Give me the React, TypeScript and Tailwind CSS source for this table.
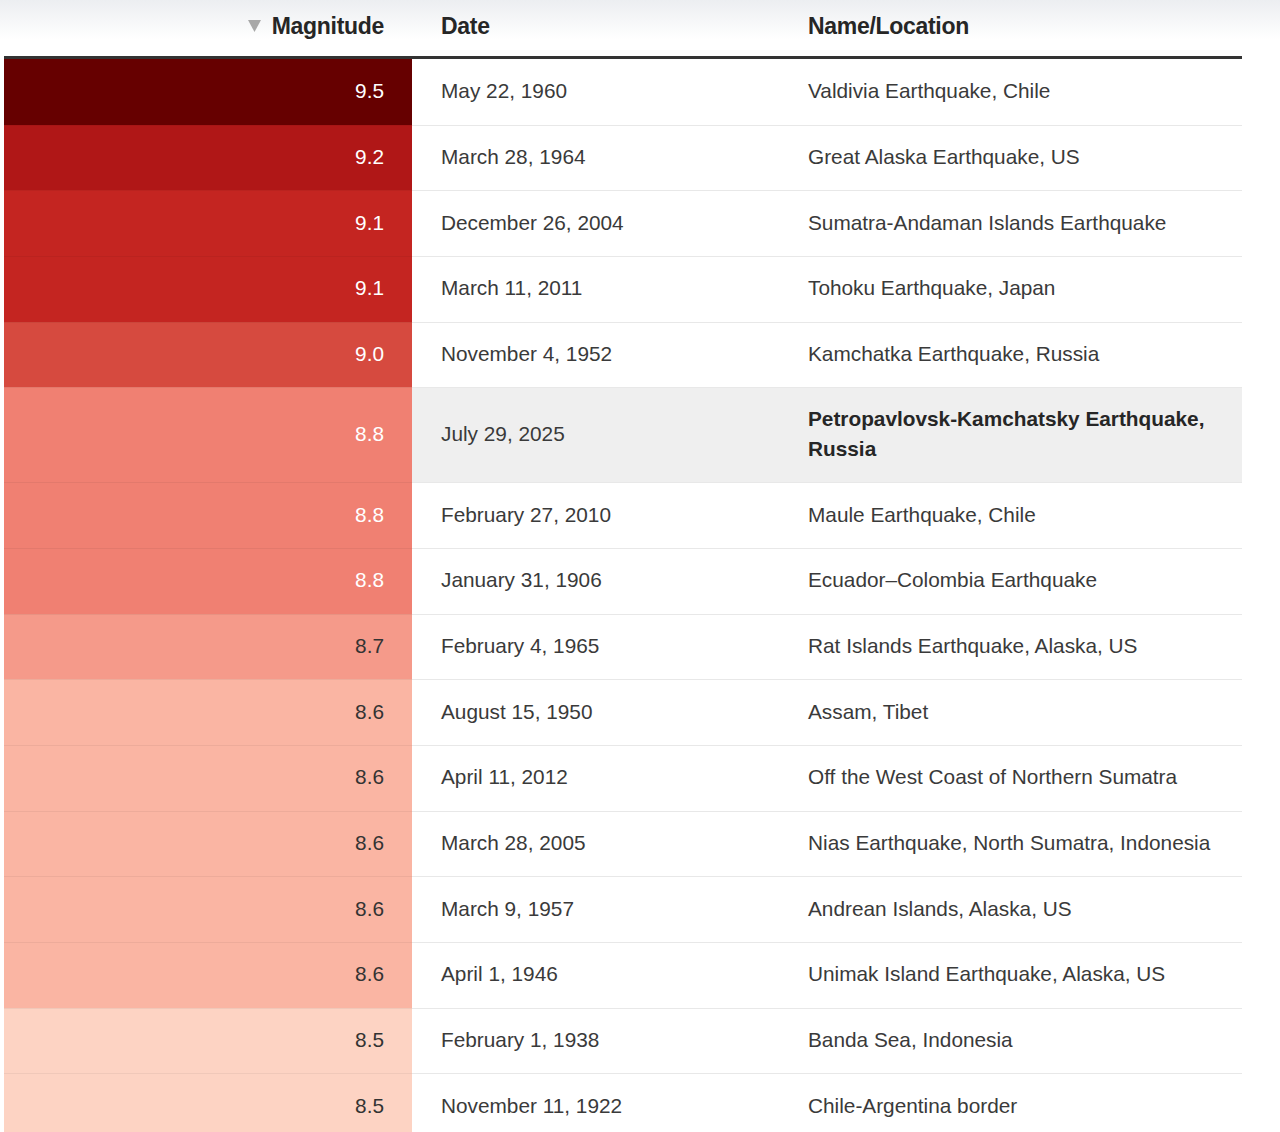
import React from "react";

type Quake = {
  mag: string;
  date: string;
  name: string;
  bg: string;
  light: boolean;
  highlight?: boolean;
};

const quakes: Quake[] = [
  { mag: "9.5", date: "May 22, 1960", name: "Valdivia Earthquake, Chile", bg: "bg-[#660000]", light: true },
  { mag: "9.2", date: "March 28, 1964", name: "Great Alaska Earthquake, US", bg: "bg-[#b01717]", light: true },
  { mag: "9.1", date: "December 26, 2004", name: "Sumatra-Andaman Islands Earthquake", bg: "bg-[#c42521]", light: true },
  { mag: "9.1", date: "March 11, 2011", name: "Tohoku Earthquake, Japan", bg: "bg-[#c42521]", light: true },
  { mag: "9.0", date: "November 4, 1952", name: "Kamchatka Earthquake, Russia", bg: "bg-[#d64a3f]", light: true },
  {
    mag: "8.8",
    date: "July 29, 2025",
    name: "Petropavlovsk-Kamchatsky Earthquake, Russia",
    bg: "bg-[#f08072]",
    light: true,
    highlight: true,
  },
  { mag: "8.8", date: "February 27, 2010", name: "Maule Earthquake, Chile", bg: "bg-[#f08072]", light: true },
  { mag: "8.8", date: "January 31, 1906", name: "Ecuador–Colombia Earthquake", bg: "bg-[#f08072]", light: true },
  { mag: "8.7", date: "February 4, 1965", name: "Rat Islands Earthquake, Alaska, US", bg: "bg-[#f59a8a]", light: false },
  { mag: "8.6", date: "August 15, 1950", name: "Assam, Tibet", bg: "bg-[#fab5a3]", light: false },
  { mag: "8.6", date: "April 11, 2012", name: "Off the West Coast of Northern Sumatra", bg: "bg-[#fab5a3]", light: false },
  { mag: "8.6", date: "March 28, 2005", name: "Nias Earthquake, North Sumatra, Indonesia", bg: "bg-[#fab5a3]", light: false },
  { mag: "8.6", date: "March 9, 1957", name: "Andrean Islands, Alaska, US", bg: "bg-[#fab5a3]", light: false },
  { mag: "8.6", date: "April 1, 1946", name: "Unimak Island Earthquake, Alaska, US", bg: "bg-[#fab5a3]", light: false },
  { mag: "8.5", date: "February 1, 1938", name: "Banda Sea, Indonesia", bg: "bg-[#fdd3c3]", light: false },
  { mag: "8.5", date: "November 11, 1922", name: "Chile-Argentina border", bg: "bg-[#fdd3c3]", light: false },
];

export default function App() {
  return (
    <div className="min-h-[1132px] w-[1280px] overflow-hidden bg-white font-['Liberation_Sans',Arial,sans-serif] text-[#3a3a3a]">
      <div className="bg-gradient-to-b from-[#eceef1] to-white to-[70%]">
        <div className="ml-[4px] flex h-[56px] w-[1238px] items-center pb-[4px] text-[23px] font-semibold tracking-[-0.3px] text-[#262626]">
          <div className="flex w-[408px] items-center justify-end pr-[28px]">
            <svg width="13" height="12" viewBox="0 0 13 12" className="mr-[11px]">
              <path d="M0 0 H13 L6.5 12 Z" fill="#a8a8a8" />
            </svg>
            Magnitude
          </div>
          <div className="w-[368px] pl-[29px]">Date</div>
          <div className="pl-[28px]">Name/Location</div>
        </div>
      </div>
      <div className="ml-[4px] w-[1238px] border-t-[3px] border-[#333333]">
        {quakes.map((q, i) => (
          <div
            key={i}
            className={`flex pb-[2px] text-[20.8px] leading-[30px] ${
              q.highlight ? "h-[95px] bg-[#efefef]" : "h-[65.67px]"
            } ${i > 0 ? "border-t border-[#e8e8e8]" : ""}`}
          >
            <div
              className={`-mb-[2px] flex w-[408px] shrink-0 items-center justify-end pb-[2px] pr-[28px] ${q.bg} ${
                q.light ? "text-white" : "text-[#333333]"
              } ${i > 0 ? "-mt-px border-t border-black/5" : ""}`}
            >
              {q.mag}
            </div>
            <div className="flex w-[368px] shrink-0 items-center pl-[29px]">{q.date}</div>
            <div
              className={`flex flex-1 items-center pl-[28px] pr-[20px] ${
                q.highlight ? "font-semibold text-[#262626]" : ""
              }`}
            >
              {q.name}
            </div>
          </div>
        ))}
      </div>
    </div>
  );
}
